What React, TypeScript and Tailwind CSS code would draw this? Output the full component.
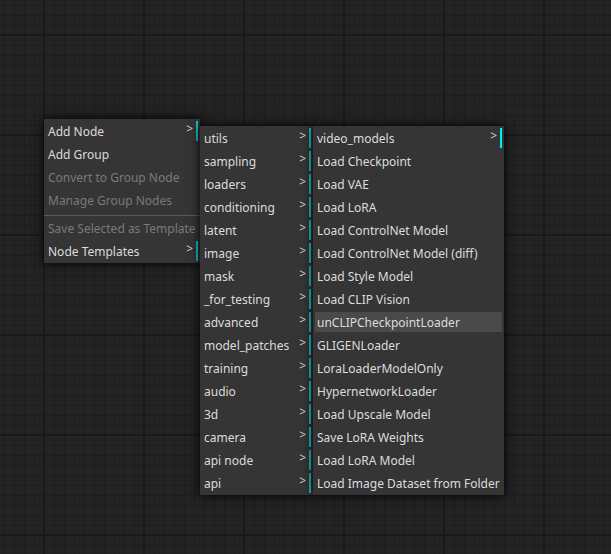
import React from 'react';

type Entry = {
  label?: string;
  submenu?: boolean;
  disabled?: boolean;
  active?: boolean;
  separator?: boolean;
};

const rootMenu: Entry[] = [
  { label: 'Add Node', submenu: true },
  { label: 'Add Group' },
  { label: 'Convert to Group Node', disabled: true },
  { label: 'Manage Group Nodes', disabled: true },
  { separator: true },
  { label: 'Save Selected as Template', disabled: true },
  { label: 'Node Templates', submenu: true },
];

const categories: Entry[] = [
  'utils', 'sampling', 'loaders', 'conditioning', 'latent', 'image', 'mask', '_for_testing',
  'advanced', 'model_patches', 'training', 'audio', '3d', 'camera', 'api node', 'api',
].map((label) => ({ label, submenu: true }));

const loaders: Entry[] = [
  { label: 'video_models', submenu: true },
  { label: 'Load Checkpoint' },
  { label: 'Load VAE' },
  { label: 'Load LoRA' },
  { label: 'Load ControlNet Model' },
  { label: 'Load ControlNet Model (diff)' },
  { label: 'Load Style Model' },
  { label: 'Load CLIP Vision' },
  { label: 'unCLIPCheckpointLoader', active: true },
  { label: 'GLIGENLoader' },
  { label: 'LoraLoaderModelOnly' },
  { label: 'HypernetworkLoader' },
  { label: 'Load Upscale Model' },
  { label: 'Save LoRA Weights' },
  { label: 'Load LoRA Model' },
  { label: 'Load Image Dataset from Folder' },
];

const MenuItem: React.FC<{ entry: Entry; barColor: string }> = ({ entry, barColor }) => {
  if (entry.separator) {
    return <div className="mt-[2px] -mb-[1px] h-px -mx-[2px] bg-[#5a5a5a]" />;
  }
  return (
    <div
      className={`relative flex h-[20px] items-center pl-[2px] pt-[2px] whitespace-nowrap
        ${entry.disabled ? 'text-[#7a7a7a]' : 'text-[#dcdcdc]'}
        ${entry.active ? 'bg-[#4a4a4a]' : ''}
        ${entry.submenu ? `border-r-2 ${barColor}` : ''}`}
    >
      {entry.label}
      {entry.submenu && (
        <span className="absolute right-[3px] top-[1px] text-[12px] leading-[14px] text-[#cfcfcf]">&gt;</span>
      )}
    </div>
  );
};

const Menu: React.FC<{ items: Entry[]; className: string; barColor?: string }> = ({
  items,
  className,
  barColor = 'border-[#14c8cd]',
}) => (
  <div
    className={`absolute flex flex-col gap-[3px] bg-[#353535] px-[2px] py-[2px] shadow-[0_0_10px_black] ${className}`}
  >
    {items.map((entry, i) => (
      <MenuItem key={i} entry={entry} barColor={barColor} />
    ))}
  </div>
);

export default function App() {
  return (
    <div
      className="relative h-[554px] w-[611px] overflow-hidden bg-[#232323] text-[12px] font-['Noto_Sans',sans-serif]
        [background-image:linear-gradient(to_right,#191919_2px,transparent_2px),linear-gradient(to_bottom,#191919_2px,transparent_2px),linear-gradient(to_right,#1d1d1d_1px,transparent_1px),linear-gradient(to_bottom,#1d1d1d_1px,transparent_1px)]
        [background-size:100px_100px,100px_100px,10px_10px,10px_10px]
        [background-position:43px_34px,43px_34px,4px_5px,4px_5px]"
    >
      <Menu items={rootMenu} className="left-[44px] top-[119px] w-[156px] z-10" />
      <Menu items={categories} className="left-[200px] top-[126px] w-[113px] z-20" />
      <Menu items={loaders} className="left-[313px] top-[126px] w-[191px] z-30" barColor="border-[#00f0f8]" />
    </div>
  );
}
